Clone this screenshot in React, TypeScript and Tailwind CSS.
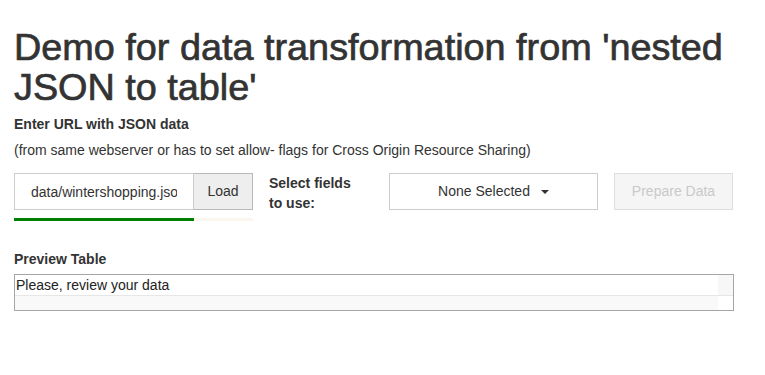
import React from "react";

export default function App() {
  return (
    <div
      className="min-h-[375px] w-full bg-white px-[14px] text-[#333]"
      style={{ fontFamily: '"Liberation Sans", Arial, Helvetica, sans-serif' }}
    >
      <h1 className="pt-[27px] text-[37.8px] leading-[40px] font-normal text-[#333] [-webkit-text-stroke:0.7px_#333]">
        Demo for data transformation from 'nested JSON to table'
      </h1>

      <div className="mt-[7px] text-[14px] leading-[20px] font-bold">Enter URL with JSON data</div>
      <div className="mt-[6px] text-[14px] leading-[20px]">
        (from same webserver or has to set allow- flags for Cross Origin Resource Sharing)
      </div>

      <div className="mt-[13px] flex items-start">
        <div className="flex w-[239px] flex-col">
          <div className="flex h-[37px]">
            <input
              readOnly
              value="data/wintershopping.json"
              className="h-[37px] w-[180px] border border-[#cccccc] bg-white px-[16px] text-[14px] text-[#333] outline-none"
            />
            <button className="h-[37px] w-[59px] border border-l-0 border-[#b9b9b9] bg-[#eeeeee] text-[14px] text-[#333]">
              Load
            </button>
          </div>
          <div className="mt-[8px] flex h-[3px]">
            <div className="h-full w-[180px] bg-[#008000]" />
            <div className="h-full flex-1 bg-[#fcf7ee]" />
          </div>
        </div>

        <div className="ml-[16px] w-[95px] text-[14px] leading-[20px] font-bold">Select fields to use:</div>

        <button className="ml-[25px] flex h-[37px] w-[209px] items-center justify-center border border-[#cccccc] bg-white text-[14px] text-[#333]">
          <span>None Selected</span>
          <span className="ml-[11px] inline-block h-0 w-0 border-x-[4px] border-t-[4px] border-x-transparent border-t-[#333]" />
        </button>

        <button className="ml-[16px] h-[37px] w-[119px] border border-[#dddddd] bg-[#f5f5f5] text-[14px] text-[#c9c9c9]">
          Prepare Data
        </button>
      </div>

      <div className="mt-[28px] text-[14px] leading-[20px] font-bold">Preview Table</div>

      <div className="mt-[5px] w-[720px] border border-[#a6a6a6]">
        <div className="flex h-[21px] border-b border-[#e6e6e6]">
          <div className="flex-1 pl-[1px] text-[14px] leading-[20px] text-[#222]">Please, review your data</div>
          <div className="w-[15px] bg-[#f7f7f7]" />
        </div>
        <div className="flex h-[14px]">
          <div className="flex-1 bg-[#f9f9f9]" />
          <div className="w-[15px] bg-white" />
        </div>
      </div>
    </div>
  );
}
